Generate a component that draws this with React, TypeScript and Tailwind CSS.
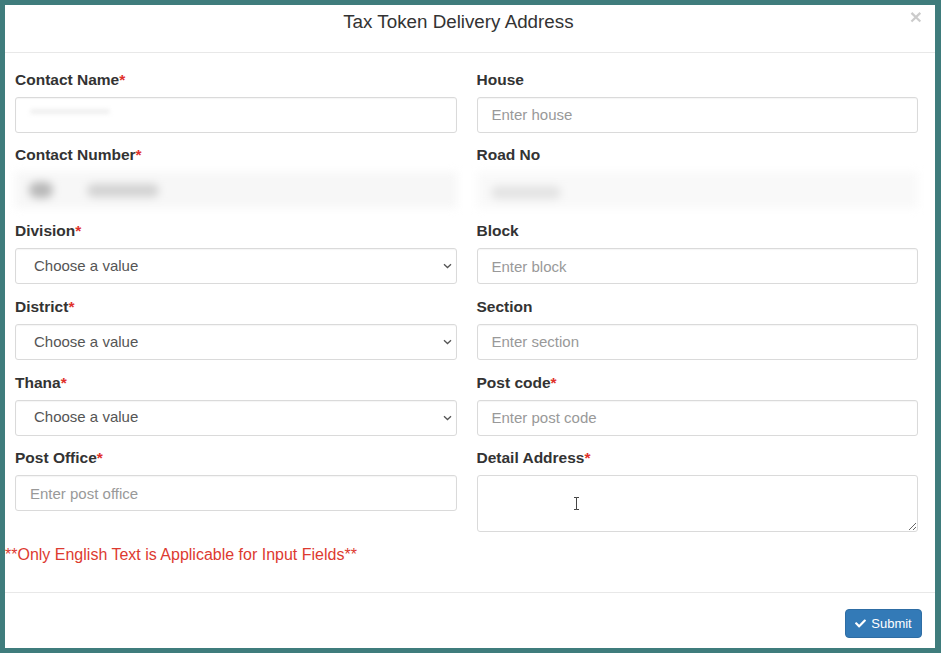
import React from 'react';
import { FaCheck } from 'react-icons/fa';

const inputBase =
  'h-[36px] w-full rounded-[3px] border border-[#dadada] bg-white text-[15px] text-[#555] outline-none shadow-[inset_0_1px_1px_rgba(0,0,0,0.04)]';

function Label({ text, required }: { text: string; required?: boolean }) {
  return (
    <label className="block h-[22px] text-[15.5px] font-bold leading-[22px] text-[#333]">
      {text}
      {required && <span className="text-[#e0312b]">*</span>}
    </label>
  );
}

function TextField({ label, required, placeholder }: { label: string; required?: boolean; placeholder: string }) {
  return (
    <div className="flex flex-col gap-[6px]">
      <Label text={label} required={required} />
      <input placeholder={placeholder} className={`${inputBase} px-[14px] placeholder:text-[#999]`} />
    </div>
  );
}

function SelectField({ label }: { label: string }) {
  return (
    <div className="flex flex-col gap-[6px]">
      <Label text={label} required />
      <div className="relative">
        <select defaultValue="" className={`${inputBase} appearance-none pl-[18px]`}>
          <option value="">Choose a value</option>
        </select>
        <svg
          className="pointer-events-none absolute right-[5px] top-1/2 -translate-y-1/2"
          width="9"
          height="6"
          viewBox="0 0 9 6"
        >
          <path d="M1 1.2l3.5 3.3 3.5-3.3" stroke="#555" strokeWidth="1.3" fill="none" />
        </svg>
      </div>
    </div>
  );
}

export default function App() {
  return (
    <div className="h-[653px] w-[941px] bg-[#3f7c7c] pb-[5px] pl-[5px] pr-[6px] pt-[5px] font-['Liberation_Sans',Arial,Helvetica,sans-serif]">
      <div className="flex h-full flex-col bg-white">
        {/* header */}
        <div className="flex h-[48px] items-start border-b border-[#e8e8e8] pl-[15px] pr-[13px]">
          <h4 className="flex-1 pt-[4px] text-center text-[18.8px] leading-[26px] text-[#333]">
            Tax Token Delivery Address
          </h4>
          <button className="ml-[13px] pt-[1px] text-[21px] font-bold leading-none text-black opacity-20">×</button>
        </div>

        {/* body */}
        <div className="flex-1 pt-[15.5px]">
          <div className="grid grid-cols-2 gap-x-[20px] gap-y-[11.8px] pl-[10px] pr-[17px]">
            <div className="flex flex-col gap-[6px]">
              <Label text="Contact Name" required />
              <div className={`${inputBase} flex items-center px-[14px]`}>
                <span className="mt-[-6px] h-[5px] w-[80px] rounded-full bg-[#efefef] blur-[2px]" />
              </div>
            </div>
            <TextField label="House" placeholder="Enter house" />

            <div className="flex flex-col gap-[6px]">
              <Label text="Contact Number" required />
              <div className="flex h-[36px] w-full items-center gap-[34px] bg-[#f7f7f7] pl-[14px] blur-[4px]">
                <span className="h-[16px] w-[24px] rounded-full bg-[#b8b8b8]" />
                <span className="h-[13px] w-[72px] rounded-full bg-[#d2d2d2]" />
              </div>
            </div>
            <div className="flex flex-col gap-[6px]">
              <Label text="Road No" />
              <div className="flex h-[36px] w-full items-center bg-[#f9f9f9] pl-[14px] blur-[4px]">
                <span className="mt-[4px] h-[13px] w-[70px] rounded-full bg-[#e3e3e3]" />
              </div>
            </div>

            <SelectField label="Division" />
            <TextField label="Block" placeholder="Enter block" />

            <SelectField label="District" />
            <TextField label="Section" placeholder="Enter section" />

            <SelectField label="Thana" />
            <TextField label="Post code" required placeholder="Enter post code" />

            <TextField label="Post Office" required placeholder="Enter post office" />
            <div className="flex flex-col gap-[6px]">
              <Label text="Detail Address" required />
              <div className="relative">
                <textarea className="block h-[57px] w-full rounded-[3px] border border-[#dadada] px-[14px] py-[6px] text-[15px] text-[#555] outline-none" />
                <svg className="pointer-events-none absolute left-[96px] top-[22px]" width="7" height="13" viewBox="0 0 7 13">
                  <path d="M1 0.5h2.5M3.5 0.5h2.5M3.5 0.5v12M1 12.5h2.5M3.5 12.5h2.5" stroke="#444" strokeWidth="1" fill="none" />
                </svg>
              </div>
            </div>
          </div>

          <p className="mt-[12px] text-[16px] leading-[22px] text-[#dd3a30]">
            **Only English Text is Applicable for Input Fields**
          </p>
        </div>

        {/* footer */}
        <div className="flex h-[56px] justify-end border-t border-[#e8e8e8] pr-[13px] pt-[16px]">
          <button className="flex h-[29px] w-[77px] items-center justify-center gap-[5px] rounded-[4px] border border-[#2e6da4] bg-[#337ab7] text-[13px] text-white">
            <FaCheck className="h-[11px] w-[11px]" />
            Submit
          </button>
        </div>
      </div>
    </div>
  );
}
